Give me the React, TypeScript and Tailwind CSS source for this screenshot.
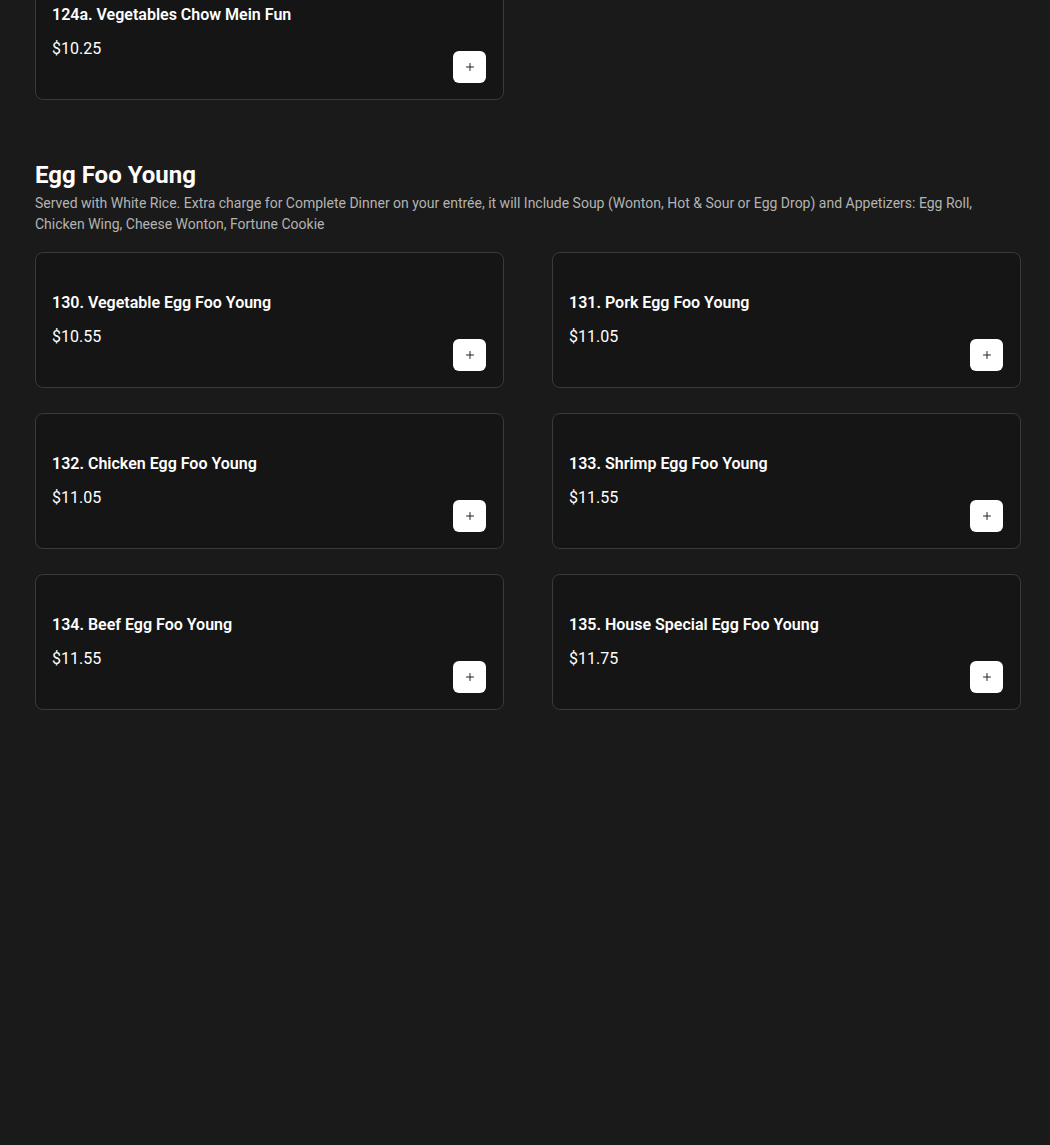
import { Plus } from "lucide-react";

type Item = {
  name: string;
  price: string;
};

const eggFooYoung: Item[] = [
  { name: "130. Vegetable Egg Foo Young", price: "$10.55" },
  { name: "131. Pork Egg Foo Young", price: "$11.05" },
  { name: "132. Chicken Egg Foo Young", price: "$11.05" },
  { name: "133. Shrimp Egg Foo Young", price: "$11.55" },
  { name: "134. Beef Egg Foo Young", price: "$11.55" },
  { name: "135. House Special Egg Foo Young", price: "$11.75" },
];

function MenuCard({ item }: { item: Item }) {
  return (
    <div className="flex h-[136px] flex-col rounded-lg border border-[#3a3a3a] bg-[#151515] pb-4 pl-4 pr-[17px] pt-[40px]">
      <h3 className="text-[16px] font-semibold leading-5 text-white">{item.name}</h3>
      <div className="mt-auto flex items-end justify-between">
        <p className="mb-[24px] text-[16px] leading-5 text-white">{item.price}</p>
        <button
          className="flex h-8 w-[33px] items-center justify-center rounded-md bg-white text-[#222]"
          type="button"
          aria-label={`Add ${item.name}`}
        >
          <Plus size={12} strokeWidth={2} />
        </button>
      </div>
    </div>
  );
}

export default function App() {
  return (
    <div
      className="flow-root min-h-screen bg-[#1a1a1a] px-[35px] pb-10"
      style={{ fontFamily: "Roboto, 'Liberation Sans', sans-serif" }}
    >
      <div className="-mt-[36px] grid w-[986px] grid-cols-2 gap-x-[48px]">
        <MenuCard item={{ name: "124a. Vegetables Chow Mein Fun", price: "$10.25" }} />
      </div>

      <section className="mt-[59px] w-[986px]">
        <h2 className="text-[24px] font-bold leading-[33px] text-white">Egg Foo Young</h2>
        <p className="pt-[1px] text-[14px] leading-[21px] text-[#b3b3b3]">
          Served with White Rice. Extra charge for Complete Dinner on your entrée, it will Include Soup (Wonton, Hot &amp;
          Sour or Egg Drop) and Appetizers: Egg Roll, Chicken Wing, Cheese Wonton, Fortune Cookie
        </p>

        <div className="mt-[17px] grid grid-cols-2 gap-x-[48px] gap-y-[25px]">
          {eggFooYoung.map((item) => (
            <MenuCard key={item.name} item={item} />
          ))}
        </div>
      </section>
    </div>
  );
}
